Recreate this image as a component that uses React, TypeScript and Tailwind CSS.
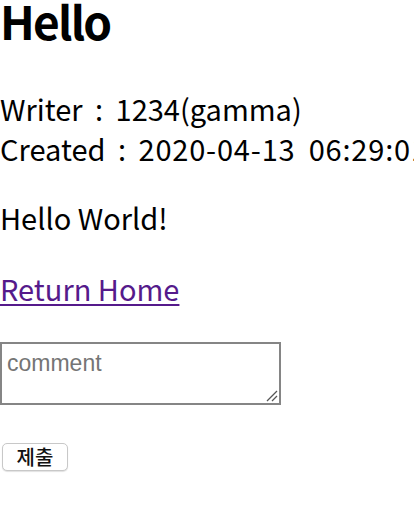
export default function App() {
  return (
    <div className="w-[414px] h-[510px] overflow-hidden bg-white text-black font-['Noto_Sans_CJK_KR','Noto_Sans',sans-serif]">
      <h1 className="text-[46px] font-bold leading-[46px] -mt-[3px] tracking-[-1.8px]">Hello</h1>

      <p className="mt-[45px] text-[29px] leading-[40px] whitespace-nowrap [word-spacing:6px]">
        Writer : 1234(gamma)
        <br />
        Created : <span className="tracking-[0.8px]">2020-04-13 06:29:01</span>
      </p>

      <p className="mt-[29px] text-[29px] leading-[40px]">Hello World!</p>

      <p className="mt-[31px] text-[29px] leading-[40px]">
        <a href="#" className="text-[#551a8b] underline underline-offset-[3px]">
          Return Home
        </a>
      </p>

      <div className="mt-[34px] relative w-[281px] h-[63px]">
        <textarea
          placeholder="comment"
          className="block w-full h-full resize-none border-2 border-[#858585] px-[5px] pt-[5px] text-[23px] leading-[28px] font-['Liberation_Sans',sans-serif] placeholder:text-[#757575] outline-none"
        />
        <svg
          className="absolute right-[3px] bottom-[3px]"
          width="12"
          height="12"
          viewBox="0 0 12 12"
        >
          <path d="M1 11 L11 1 M6 11 L11 6" stroke="#555" strokeWidth="1.3" />
        </svg>
      </div>

      <button className="mt-[38px] ml-[2px] w-[66px] h-[28px] rounded-[5px] border border-[#c8c8c8] bg-white shadow-[0_1px_1px_rgba(0,0,0,0.12)] text-[20px] leading-none font-medium text-[#111] font-['Noto_Sans_CJK_KR',sans-serif]">
        제출
      </button>
    </div>
  );
}
